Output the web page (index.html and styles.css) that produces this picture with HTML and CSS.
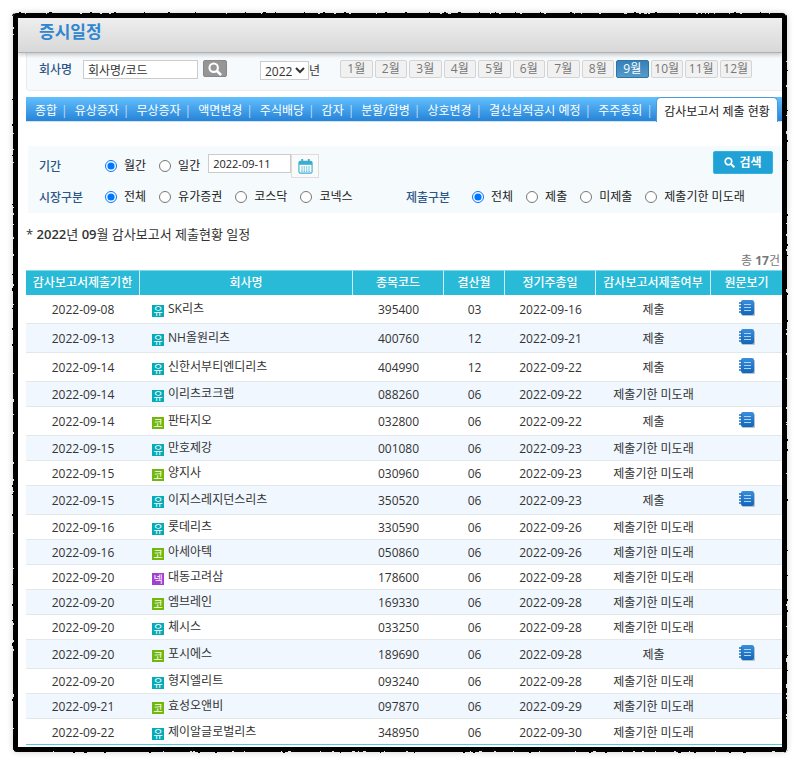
FILE: index.html
```html
<!DOCTYPE html>
<html lang="ko">
<head>
    <meta charset="UTF-8">
    <meta name="viewport" content="width=device-width, initial-scale=1.0">
    <title>증시일정</title>
    <link rel="stylesheet" href="styles.css">
</head>
<body>
    <svg class="defs" aria-hidden="true">
        <filter id="rough" x="-2%" y="-2%" width="104%" height="104%">
            <feTurbulence type="fractalNoise" baseFrequency="0.2" numOctaves="2" seed="4" result="noise"/>
            <feDisplacementMap in="SourceGraphic" in2="noise" scale="3" xChannelSelector="R" yChannelSelector="G"/>
            <feGaussianBlur stdDeviation="0.4"/>
        </filter>
        <linearGradient id="book-fill" x1="0" y1="0" x2="0" y2="1">
            <stop offset="0" stop-color="#3b8edb"/>
            <stop offset="1" stop-color="#1266b8"/>
        </linearGradient>
        <symbol id="book" viewBox="0 0 16 16">
            <rect x="3" y="2" width="13" height="14" rx="1" fill="#b9c2cb"/>
            <rect x="2" y="0" width="13" height="15" rx="2" fill="url(#book-fill)"/>
            <path d="M0 3h3M0 6h3M0 9h3M0 12h3" stroke="#1c6cb9" stroke-width="1.6"/>
            <path d="M5 4.5h7M5 7.5h7M5 10.5h7" stroke="#a9d4f7" stroke-width="1.2"/>
        </symbol>
        <symbol id="glass" viewBox="0 0 16 16">
            <circle cx="6.5" cy="6.5" r="4.8" fill="none" stroke="currentColor" stroke-width="2.4"/>
            <path d="M10 10l5 5" stroke="currentColor" stroke-width="3"/>
        </symbol>
    </svg>

    <div class="frame">
        <header class="title-bar">
            <h1>증시일정</h1>
        </header>

        <form class="search-bar">
            <label class="label" for="company">회사명</label>
            <input class="company" id="company" type="text" value="회사명/코드">
            <button class="find" type="button" aria-label="회사명 찾기"><svg><use href="#glass"/></svg></button>
            <select class="year" id="year">
                <option>2022</option>
            </select>
            <label class="year-label" for="year">년</label>
            <div class="months">
                <button type="button">1월</button>
                <button type="button">2월</button>
                <button type="button">3월</button>
                <button type="button">4월</button>
                <button type="button">5월</button>
                <button type="button">6월</button>
                <button type="button">7월</button>
                <button type="button">8월</button>
                <button type="button" class="active">9월</button>
                <button type="button">10월</button>
                <button type="button">11월</button>
                <button type="button">12월</button>
            </div>
        </form>

        <nav class="tabs">
            <ul>
                <li><a href="#">종합</a></li>
                <li><a href="#">유상증자</a></li>
                <li><a href="#">무상증자</a></li>
                <li><a href="#">액면변경</a></li>
                <li><a href="#">주식배당</a></li>
                <li><a href="#">감자</a></li>
                <li><a href="#">분할/합병</a></li>
                <li><a href="#">상호변경</a></li>
                <li><a href="#">결산실적공시 예정</a></li>
                <li><a href="#">주주총회</a></li>
            </ul>
            <a href="#" class="current">감사보고서 제출 현황</a>
        </nav>

        <form class="filter">
            <div class="filter-row">
                <span class="label">기간</span>
                <div class="options">
                    <label><input type="radio" name="period" checked>월간</label>
                    <label><input type="radio" name="period">일간</label>
                    <div class="date-box">
                        <input class="date" type="text" value="2022-09-11" aria-label="날짜">
                        <button class="calendar" type="button" aria-label="달력">
                            <svg viewBox="0 0 16 16">
                                <rect x="1" y="2.5" width="14" height="12.5" rx="1.5" fill="#fff" stroke="#3aaed0" stroke-width="1.2"/>
                                <path d="M1 4.5h14" stroke="#3aaed0" stroke-width="3.4"/>
                                <path d="M4.5 0v4M11.5 0v4" stroke="#3aaed0" stroke-width="2"/>
                                <path d="M3.5 8.5h9.5M3.5 10.7h9.5M3.5 12.9h9.5" stroke="#3aaed0" stroke-width="1.2" stroke-dasharray="1.5 1"/>
                            </svg>
                        </button>
                    </div>
                </div>
                <button class="submit" type="button"><svg><use href="#glass"/></svg>검색</button>
            </div>
            <div class="filter-row">
                <span class="label">시장구분</span>
                <div class="options market">
                    <label><input type="radio" name="market" checked>전체</label>
                    <label><input type="radio" name="market">유가증권</label>
                    <label><input type="radio" name="market">코스닥</label>
                    <label><input type="radio" name="market">코넥스</label>
                </div>
                <span class="label">제출구분</span>
                <div class="options">
                    <label><input type="radio" name="state" checked>전체</label>
                    <label><input type="radio" name="state">제출</label>
                    <label><input type="radio" name="state">미제출</label>
                    <label><input type="radio" name="state">제출기한 미도래</label>
                </div>
            </div>
        </form>

        <h2 class="caption">* <b>2022</b>년 <b>09</b>월 감사보고서 제출현황 일정</h2>
        <p class="count">총 <b>17</b>건</p>

        <table class="report">
            <colgroup>
                <col class="c-due"><col><col class="c-code"><col class="c-month"><col class="c-meet"><col class="c-state"><col class="c-doc">
            </colgroup>
            <thead>
                <tr>
                    <th>감사보고서제출기한</th>
                    <th>회사명</th>
                    <th>종목코드</th>
                    <th>결산월</th>
                    <th>정기주총일</th>
                    <th>감사보고서제출여부</th>
                    <th>원문보기</th>
                </tr>
            </thead>
            <tbody></tbody>
        </table>
    </div>

    <script>
        // due date, market, company, code, settlement month, meeting date, submitted
        const rows = [
            ['2022-09-08', '유', 'SK리츠', '395400', '03', '2022-09-16', true],
            ['2022-09-13', '유', 'NH올원리츠', '400760', '12', '2022-09-21', true],
            ['2022-09-14', '유', '신한서부티엔디리츠', '404990', '12', '2022-09-22', true],
            ['2022-09-14', '유', '이리츠코크렙', '088260', '06', '2022-09-22', false],
            ['2022-09-14', '코', '판타지오', '032800', '06', '2022-09-22', true],
            ['2022-09-15', '유', '만호제강', '001080', '06', '2022-09-23', false],
            ['2022-09-15', '코', '양지사', '030960', '06', '2022-09-23', false],
            ['2022-09-15', '유', '이지스레지던스리츠', '350520', '06', '2022-09-23', true],
            ['2022-09-16', '유', '롯데리츠', '330590', '06', '2022-09-26', false],
            ['2022-09-16', '코', '아세아텍', '050860', '06', '2022-09-26', false],
            ['2022-09-20', '넥', '대동고려삼', '178600', '06', '2022-09-28', false],
            ['2022-09-20', '코', '엠브레인', '169330', '06', '2022-09-28', false],
            ['2022-09-20', '유', '체시스', '033250', '06', '2022-09-28', false],
            ['2022-09-20', '코', '포시에스', '189690', '06', '2022-09-28', true],
            ['2022-09-20', '유', '형지엘리트', '093240', '06', '2022-09-28', false],
            ['2022-09-21', '코', '효성오앤비', '097870', '06', '2022-09-29', false],
            ['2022-09-22', '유', '제이알글로벌리츠', '348950', '06', '2022-09-30', false]
        ];
        const markets = { '유': 'kospi', '코': 'kosdaq', '넥': 'konex' };

        document.querySelector('.report tbody').innerHTML = rows.map(([due, market, name, code, month, meet, done]) => `
            <tr class="${done ? 'done' : ''}">
                <td>${due}</td>
                <td class="name"><div><span class="badge ${markets[market]}">${market}</span>${name}</div></td>
                <td>${code}</td>
                <td>${month}</td>
                <td>${meet}</td>
                <td>${done ? '제출' : '제출기한 미도래'}</td>
                <td>${done ? '<a href="#" class="doc" aria-label="원문보기"><svg><use href="#book"/></svg></a>' : ''}</td>
            </tr>`).join('');

        document.querySelectorAll('.months button').forEach(button => {
            button.addEventListener('click', () => {
                document.querySelector('.months .active').classList.remove('active');
                button.classList.add('active');
            });
        });
    </script>
</body>
</html>
```

FILE: styles.css
```css
* {
    box-sizing: border-box;
}

body {
    margin: 0;
    padding: 15px;
    background: #fff;
    color: #333;
    font-family: "Open Sans", "Noto Sans CJK KR", sans-serif;
    font-size: 12px;
    line-height: 16px;
}

input, select, button {
    font: inherit;
    color: inherit;
}

button {
    padding: 0;
    cursor: pointer;
}

a {
    color: inherit;
    text-decoration: none;
}

.defs {
    position: absolute;
    width: 0;
    height: 0;
}

.frame {
    position: relative;
    border: 3px solid #000;
    border-radius: 3px;
    padding-bottom: 2px;
    box-shadow: 0 0 6px 2px rgba(0, 0, 0, 0.2);
}

/* torn outer edge */
.frame::before {
    content: '';
    position: absolute;
    inset: -5px;
    border: 3px solid #000;
    border-radius: 4px;
    filter: url(#rough);
    pointer-events: none;
}

.title-bar {
    position: relative;
    height: 35px;
    padding: 2px 21px;
    border-bottom: 1px solid #b0b0b0;
    background: linear-gradient(#eee, #d8d8d8);
    box-shadow: 0 2px 4px rgba(0, 0, 0, 0.2);
}

.title-bar h1 {
    margin: 0;
    font-size: 17px;
    line-height: 24px;
    color: #3086cf;
}

.search-bar {
    display: flex;
    align-items: flex-start;
    height: 38px;
    margin-left: 8px;
    padding: 7px 30px 0 12px;
    border-bottom: 1px solid #e6eef1;
    border-left: 1px solid #e6eef1;
    border-bottom-left-radius: 4px;
    background: #f6fafc;
}

.label {
    color: #2c5687;
    font-weight: 500;
}

.search-bar .label {
    width: 44px;
    line-height: 20px;
}

.company {
    width: 115px;
    height: 19px;
    padding: 0 4px;
    border: 1px solid #ccc;
    background: #fff;
}

.find {
    display: flex;
    align-items: center;
    justify-content: center;
    width: 24px;
    height: 17px;
    margin-left: 5px;
    border: 1px solid #888;
    border-radius: 2px;
    background: #969696;
    color: #fff;
}

.find svg {
    width: 14px;
    height: 14px;
}

.year {
    width: 49px;
    height: 19px;
    margin: 1px 0 0 33px;
    padding: 0;
    border: 1px solid #ccc;
    border-radius: 0;
    background: #fff;
}

.year-label {
    margin-right: 20px;
    line-height: 22px;
}

.months {
    flex: 1;
    display: grid;
    grid-template-columns: repeat(12, 1fr);
    gap: 2px;
}

.months button {
    height: 18px;
    border: 1px solid #d4d4d4;
    border-radius: 2px;
    background: #f1f1f1;
    color: #777;
    line-height: 16px;
}

.months .active {
    border-color: #2d74a8;
    background: linear-gradient(#3580b8, #559bc9);
    color: #fff;
}

.tabs {
    display: flex;
    height: 25px;
    margin: 6px 0 0 8px;
    border-bottom: 1px solid #cfe4f5;
    padding-right: 4px;
    background: linear-gradient(#62c0fe, #2683d7);
    color: #fff;
    white-space: nowrap;
}

.tabs ul {
    flex: 1;
    display: flex;
    justify-content: space-between;
    margin: 0;
    padding: 0 3px 0 9px;
    list-style: none;
    line-height: 28px;
}

.tabs li::after {
    content: '|';
    margin-left: 4px;
    color: #c9dcf5;
}

.tabs .current {
    width: 122px;
    height: 25px;
    border: 1px solid #4a9ade;
    border-bottom: 0;
    border-radius: 5px 5px 0 0;
    background: #fff;
    color: #222;
    line-height: 28px;
    text-align: center;
}

.filter {
    margin: 24px 0 0 10px;
    padding: 5px 9px 1px 11px;
    background: #f5fafc;
    color: #222;
}

.filter-row {
    display: flex;
    align-items: center;
    height: 30px;
}

.filter-row + .filter-row {
    height: 31px;
}

.filter .label {
    width: 66px;
    padding-top: 2px;
}

.options {
    display: flex;
    align-items: center;
    gap: 13px;
}

.options label {
    display: flex;
    align-items: center;
    white-space: nowrap;
}

.options input[type="radio"] {
    width: 12px;
    height: 12px;
    margin: 0 7px 0 0;
}

.market {
    width: 301px;
}

.date-box {
    display: flex;
    align-items: flex-start;
    margin-left: -5px;
}

.date {
    width: 83px;
    height: 19px;
    padding: 0 4px;
    border: 1px solid #ccc;
    background: #fff;
    font-size: 11px;
}

.calendar {
    display: flex;
    align-items: center;
    justify-content: center;
    width: 28px;
    height: 24px;
    border: 1px solid #ddd;
    background: #fafafa;
}

.calendar svg {
    width: 15px;
    height: 15px;
}

.submit {
    display: flex;
    align-items: center;
    justify-content: center;
    gap: 4px;
    align-self: flex-start;
    width: 60px;
    height: 23px;
    margin-left: auto;
    border: 1px solid #35b2de;
    border-radius: 2px;
    background: #20a2d6;
    color: #fff;
    font-weight: bold;
}

.submit svg {
    width: 11px;
    height: 11px;
}

.caption {
    margin: 11px 0 0 8px;
    font-size: 13px;
    font-weight: normal;
    line-height: 20px;
}

.caption b {
    font-weight: 600;
}

.count {
    margin: 9px 2px 1px;
    color: #777;
    text-align: right;
}

.report {
    width: calc(100% - 8px);
    margin-left: 8px;
    border-spacing: 0;
    border-bottom: 1px solid #4fcbe0;
    table-layout: fixed;
}

.c-due { width: 114px; }
.c-code { width: 91px; }
.c-month { width: 61px; }
.c-meet { width: 91px; }
.c-state { width: 115px; }
.c-doc { width: 71px; }

.report th {
    height: 25px;
    padding: 0;
    border-top: 1px solid #7fd7e8;
    border-right: 1px solid #cdf0f7;
    background: #29bad8;
    color: #fff;
    font-weight: 500;
    white-space: nowrap;
}

.report th:last-child {
    border-right: 0;
}

.report td {
    height: 25px;
    padding: 2px 0 0;
    border-bottom: 1px solid #e2e7ea;
    text-align: center;
}

.report .done td {
    height: 29px;
}

.report tbody tr:nth-child(even) {
    background: #f0f7fe;
}

.report tbody tr:last-child td {
    border-bottom: 0;
}

.name div {
    display: flex;
    align-items: center;
    padding: 0 0 2px 12px;
}

.badge {
    width: 12px;
    height: 12px;
    margin: 4px 4px 0 0;
    color: #fff;
    font-size: 10px;
    line-height: 12px;
    text-align: center;
}

.kospi { background: #06abb8; }
.kosdaq { background: #72b70c; }
.konex { background: #a13fd0; }

.doc {
    display: block;
    padding-bottom: 5px;
}

.doc svg {
    display: block;
    width: 16px;
    height: 16px;
    margin: 0 auto;
}
```
